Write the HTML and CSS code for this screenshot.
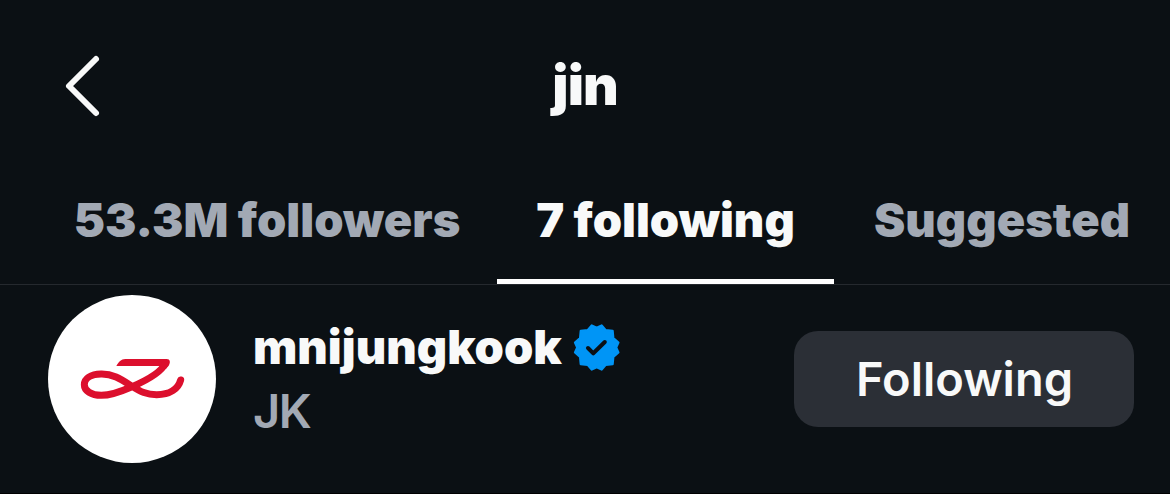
FILE: index.html
```html
<!DOCTYPE html>
<html lang="en">

<head>
    <meta charset="UTF-8">
    <meta name="viewport" content="width=device-width, initial-scale=1.0">
    <title>jin</title>
    <link rel="stylesheet" href="styles.css">
</head>

<body>
    <div class="app">
        <header class="header">
            <a class="back" href="#" aria-label="Back">
                <svg width="40" height="64" viewBox="0 0 40 64">
                    <path d="M33 5 6 32 33 59" />
                </svg>
            </a>
            <h1 class="title">jin</h1>
        </header>

        <nav class="tabs">
            <a class="tab tab-followers" href="#">53.3M followers</a>
            <a class="tab tab-following active" href="#">7 following</a>
            <a class="tab tab-suggested" href="#">Suggested</a>
        </nav>

        <div class="user">
            <svg class="avatar" viewBox="24 15 504 504">
                <circle cx="276" cy="267" r="252" fill="#fff" />
                <path class="logo-bar" d="M229 228 C236 216 243 207 256 207 H380 C391 207 392 218 386 227 L378 236 L350 240 L361 228 Z" />
                <path class="logo-line" d="M376 220 C365 244 322 270 276 290 C244 304 215 316 184 316 C153 316 133 302 133 284 C133 265 152 253 183 252 C220 251 246 270 276 289 C302 305 320 314 350 314 C390 314 415 296 422 270" />
            </svg>
            <div class="user-info">
                <div class="username">
                    <span class="username-text">mnijungkook</span>
                    <svg class="badge" viewBox="0 0 47 47">
                        <path class="badge-shape" transform="translate(1.1 .9) scale(1.13)" d="M20 2.6 15.6 .5 12 4.7 5.9 5.3 5.3 11.6 .8 15.6 2.8 20 .8 24.4 5.3 28.4 5.9 34.7 12 35.3 15.6 39.5 20 37.4 24.4 39.5 28 35.3 34.1 34.7 34.7 28.4 39.2 24.4 37.2 20 39.2 15.6 34.7 11.6 34.1 5.3 28 4.7 24.4 .5Z" />
                        <path class="badge-check" d="M15 24 20.3 29.3 31.8 18" />
                    </svg>
                </div>
                <div class="name">JK</div>
            </div>
            <button class="follow-button">Following</button>
        </div>
    </div>
</body>

</html>
```
FILE: styles.css
```css
body {
    margin: 0;
    background: #0b1014;
    color: #f8f9f9;
    font-family: Inter, sans-serif;
}

a {
    color: inherit;
    text-decoration: none;
}

.app {
    height: 494px;
    box-sizing: border-box;
    border-bottom: 1px solid #000;
    overflow: hidden;
}

.header {
    display: grid;
    grid-template-columns: 100px 1fr 100px;
    align-items: center;
    height: 172px;
    padding: 0 64px;
}

.back svg {
    display: block;
    margin-left: -1px;
    fill: none;
    stroke: #f8f9f9;
    stroke-width: 6;
    stroke-linecap: round;
    stroke-linejoin: round;
}

.title {
    margin: 0;
    padding-bottom: 2px;
    text-align: center;
    font-size: 55px;
    line-height: 64px;
    font-weight: 900;
    letter-spacing: -1px;
}

.tabs {
    display: flex;
    height: 112px;
    padding-left: 37px;
    border-bottom: 1px solid #25292e;
}

.tab {
    box-sizing: border-box;
    padding-top: 16px;
    border-bottom: 5px solid transparent;
    color: #a2a9b4;
    font-size: 47px;
    line-height: 64px;
    font-weight: 900;
    text-align: center;
    white-space: nowrap;
}

.tab-followers {
    width: 460px;
}

.tab-following {
    width: 337px;
}

.tab-suggested {
    width: 336px;
}

.tab.active {
    color: #f8f9f9;
    border-bottom-color: #fff;
}

.user {
    display: flex;
    align-items: center;
    padding: 10px 36px 0 48px;
}

.avatar {
    width: 168px;
    height: 168px;
}

.logo-bar {
    fill: #dc0f2d;
}

.logo-line {
    fill: none;
    stroke: #dc0f2d;
    stroke-width: 21;
    stroke-linecap: round;
    stroke-linejoin: round;
}

.user-info {
    flex: 1;
    padding-left: 37px;
    font-size: 47px;
    line-height: 64px;
}

.username {
    display: flex;
    align-items: center;
    gap: 11px;
    font-weight: 900;
}

.badge {
    width: 47px;
    height: 47px;
}

.badge-shape {
    fill: #0095f6;
    stroke: #0095f6;
    stroke-width: 2;
    stroke-linejoin: round;
}

.badge-check {
    fill: none;
    stroke: #0b1014;
    stroke-width: 4;
    stroke-linecap: round;
    stroke-linejoin: round;
}

.name {
    color: #a2a9b4;
    font-weight: 600;
    letter-spacing: -1.5px;
}

.follow-button {
    width: 340px;
    height: 96px;
    padding: 0 0 2px 1px;
    border: none;
    border-radius: 24px;
    background: #2b2f36;
    color: #f8f9f9;
    font-family: inherit;
    font-size: 47px;
    font-weight: 600;
    cursor: pointer;
}
```
